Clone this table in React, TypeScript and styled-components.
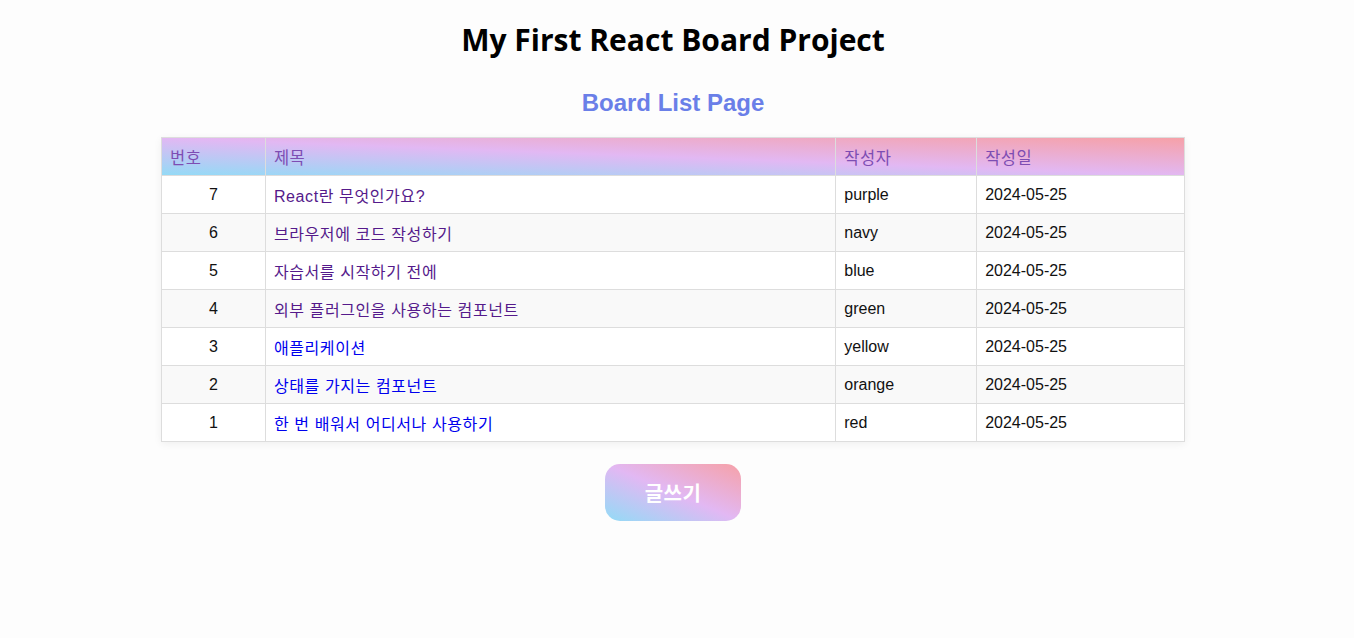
import styled, { createGlobalStyle } from 'styled-components';

const GlobalStyle = createGlobalStyle`
  body {
    margin: 0;
    background: #fdfdfd;
    font-family: "Liberation Sans", Arial, "Noto Sans CJK KR", sans-serif;
  }
`;

const Page = styled.div`
  display: flex;
  flex-direction: column;
  align-items: center;
  padding: 20px 8px 0 0;
`;

const Title = styled.h1`
  margin: 0;
  font-family: "Open Sans", "Noto Sans CJK KR", sans-serif;
  font-size: 30px;
  font-weight: 700;
  line-height: 40px;
  color: #000;
`;

const SubTitle = styled.h2`
  margin: 25px 0 0;
  font-size: 24px;
  font-weight: 700;
  line-height: 36px;
  color: #6a7fe8;
`;

const Table = styled.table`
  margin-top: 16px;
  width: 1024px;
  border-collapse: collapse;
  border: 1px solid #ddd;
  box-shadow: 0 2px 8px rgba(0, 0, 0, 0.06);
  background: #fff;
  font-size: 16px;

  thead tr {
    background: linear-gradient(to top right, #92dbf6, #e2b8f3 50%, #f6a1a8);
  }

  tbody tr:nth-child(even) {
    background: #f9f9f9;
  }
`;

const Th = styled.th<{ $w: number }>`
  width: ${p => p.$w}px;
  height: 37px;
  padding: 0 8px;
  border: 1px solid #ddd;
  text-align: left;
  font-weight: 400;
  font-size: 16.5px;
  letter-spacing: 0.5px;
  color: #7d4db3;
  font-family: "Noto Sans CJK KR", sans-serif;
`;

const Td = styled.td<{ $center?: boolean }>`
  height: 37px;
  padding: 0 8px;
  border: 1px solid #ddd;
  text-align: ${p => (p.$center ? 'center' : 'left')};
  color: #111;
`;

const TitleLink = styled.a<{ $visited?: boolean }>`
  color: ${p => (p.$visited ? '#551a8b' : '#0000ee')};
  text-decoration: none;
  letter-spacing: 0.6px;
  cursor: pointer;
`;

const WriteButton = styled.button`
  margin-top: 22px;
  width: 136px;
  height: 57px;
  border: none;
  border-radius: 15px;
  background: linear-gradient(to top right, #92dbf6, #e2b8f3 50%, #f6a1a8);
  color: #fff;
  font-family: "Noto Sans CJK KR", sans-serif;
  font-size: 20px;
  font-weight: 700;
  letter-spacing: 0.5px;
  cursor: pointer;
`;

const posts = [
  { id: 7, title: 'React란 무엇인가요?', writer: 'purple', visited: true },
  { id: 6, title: '브라우저에 코드 작성하기', writer: 'navy', visited: true },
  { id: 5, title: '자습서를 시작하기 전에', writer: 'blue', visited: true },
  { id: 4, title: '외부 플러그인을 사용하는 컴포넌트', writer: 'green', visited: true },
  { id: 3, title: '애플리케이션', writer: 'yellow', visited: false },
  { id: 2, title: '상태를 가지는 컴포넌트', writer: 'orange', visited: false },
  { id: 1, title: '한 번 배워서 어디서나 사용하기', writer: 'red', visited: false },
];

export default function App() {
  return (
    <Page>
      <GlobalStyle />
      <Title>My First React Board Project</Title>
      <SubTitle>Board List Page</SubTitle>
      <Table>
        <thead>
          <tr>
            <Th $w={87}>번호</Th>
            <Th $w={554}>제목</Th>
            <Th $w={124}>작성자</Th>
            <Th $w={191}>작성일</Th>
          </tr>
        </thead>
        <tbody>
          {posts.map(post => (
            <tr key={post.id}>
              <Td $center>{post.id}</Td>
              <Td>
                <TitleLink $visited={post.visited}>{post.title}</TitleLink>
              </Td>
              <Td>{post.writer}</Td>
              <Td>2024-05-25</Td>
            </tr>
          ))}
        </tbody>
      </Table>
      <WriteButton>글쓰기</WriteButton>
    </Page>
  );
}
